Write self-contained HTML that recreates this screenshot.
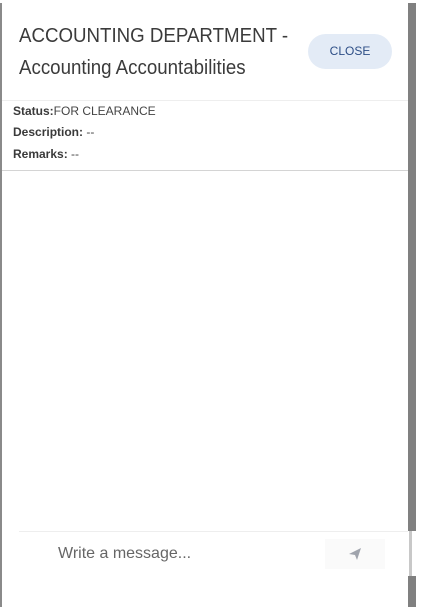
<!DOCTYPE html>
<html><head><style>
body{margin:0;width:422px;height:607px;background:#fff;position:relative;overflow:hidden;font-family:"Liberation Sans",sans-serif;}
.lg{position:absolute;left:0;top:3px;width:2px;height:604px;background:#8a8a8a;}
.rg{position:absolute;left:408px;top:3px;width:8px;height:604px;background:#808080;}
.rgl{position:absolute;left:408px;top:531px;width:8px;height:45px;background:#fff;}
.rgl2{position:absolute;left:409px;top:531px;width:3px;height:45px;background:#c8c8c8;}
.m{position:absolute;left:2px;top:3px;width:406px;height:604px;background:#fff;border-radius:8px 8px 0 0;}
.t{position:absolute;left:19px;top:20px;font-size:20px;line-height:32px;color:#3b3b3b;transform:scaleX(0.935);transform-origin:left top;white-space:nowrap;}
.c{position:absolute;left:308px;top:34px;width:84px;height:35px;border-radius:18px;background:#e3ebf6;color:#2d4e86;font-size:12px;text-align:center;line-height:35px;}
.h1{position:absolute;left:2px;top:100px;width:406px;height:1px;background:#eee;}
.h2{position:absolute;left:2px;top:170px;width:406px;height:1px;background:#d4d4d4;}
.i{position:absolute;left:13px;font-size:12px;color:#444;}
.i b{color:#3a3a3a}
.h3{position:absolute;left:19px;top:531px;width:389px;height:1px;background:#eee;}
.w{position:absolute;left:58px;top:545px;font-size:16px;color:#666;}
.s{position:absolute;left:325px;top:539px;width:60px;height:30px;background:#fafafa;}
</style></head><body>
<div class="lg"></div><div class="rg"></div><div class="rgl"></div><div class="rgl2"></div>
<div class="m"></div>
<div class="t">ACCOUNTING DEPARTMENT -<br>Accounting Accountabilities</div>
<div class="c">CLOSE</div>
<div class="h1"></div>
<div class="i" style="top:104px"><b>Status:</b>FOR CLEARANCE</div>
<div class="i" style="top:125px"><b>Description:</b> --</div>
<div class="i" style="top:147px"><b>Remarks:</b> --</div>
<div class="h2"></div>
<div class="h3"></div>
<div class="w">Write a message...</div>
<div class="s"><svg width="60" height="30" viewBox="0 0 60 30"><path d="M24 15 L36 9 L32 21 L30 16 Z" fill="#a0a4ad"/></svg></div>
</body></html>
